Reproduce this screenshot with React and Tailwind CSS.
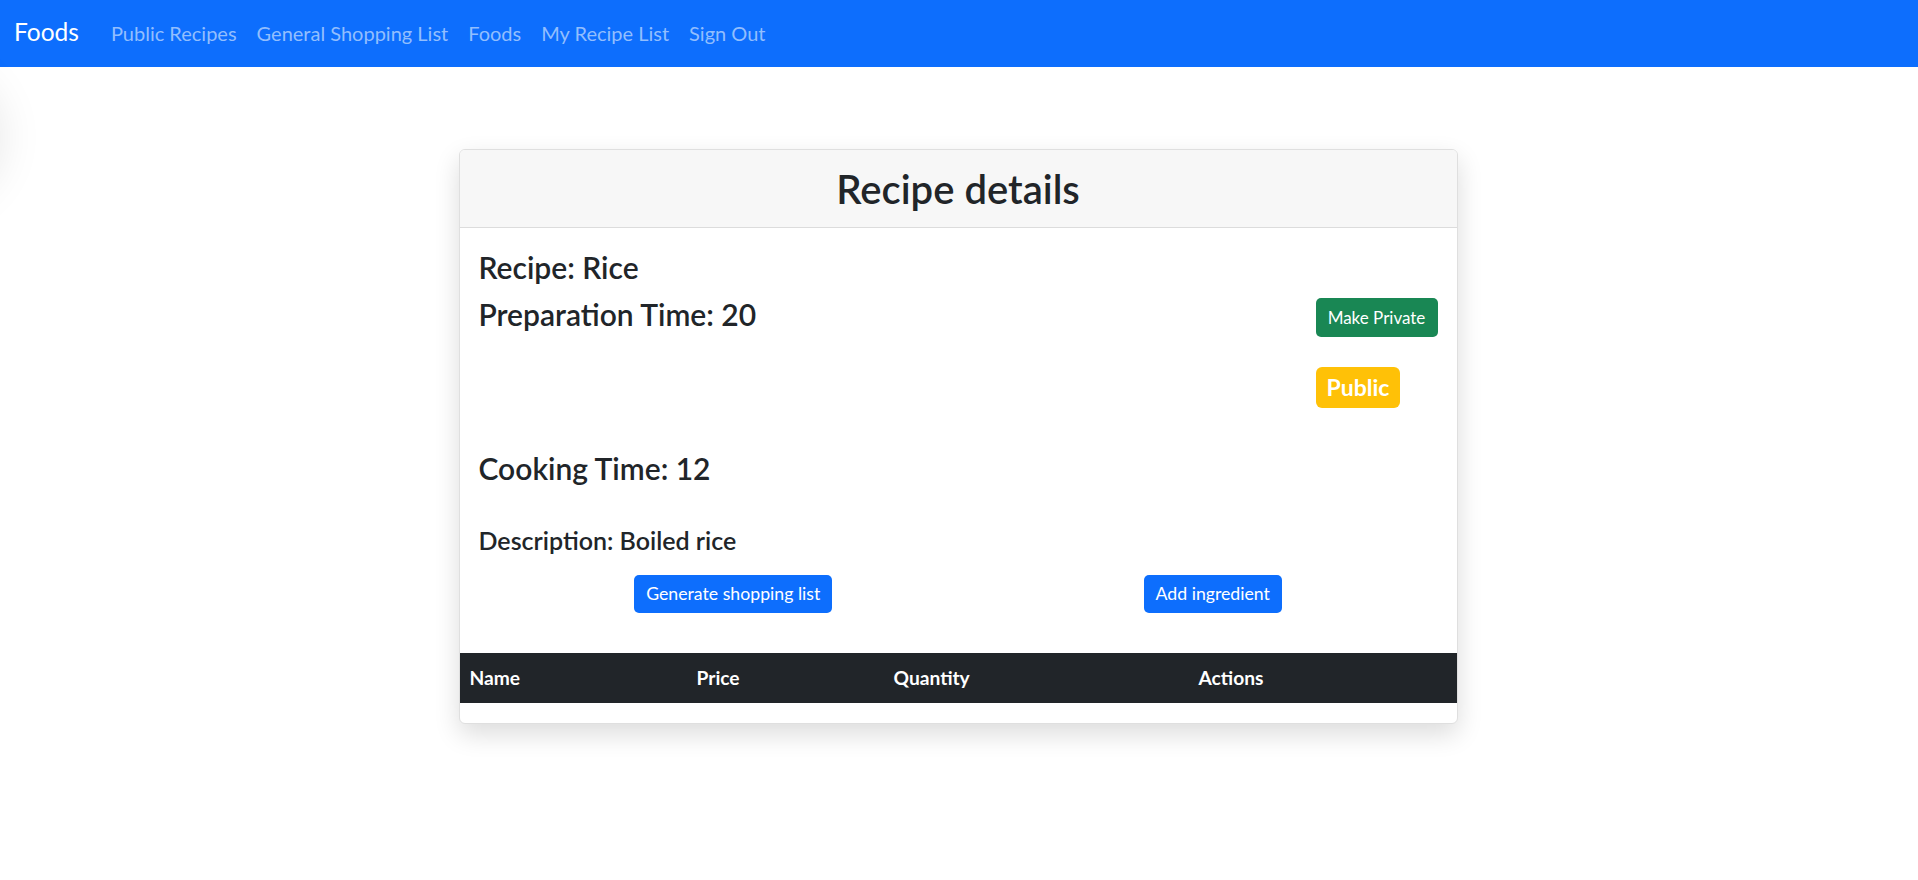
import React from 'react';

const font = { fontFamily: 'Lato, "Liberation Sans", sans-serif' };

const navLinks = ['Public Recipes', 'General Shopping List', 'Foods', 'My Recipe List', 'Sign Out'];

function Navbar() {
  return (
    <nav className="flex h-[67px] items-center bg-[#0d6efd] px-[14px] pb-[2px]">
      <span className="mr-[22px] text-[24.5px] leading-[1.5] text-white">Foods</span>
      <div className="flex items-center">
        {navLinks.map((l) => (
          <a key={l} href="#" className="px-[10px] text-[20px] leading-[1.5] text-[#92befe]">
            {l}
          </a>
        ))}
      </div>
    </nav>
  );
}

export default function App() {
  return (
    <div className="relative min-h-screen overflow-hidden bg-white text-[#212529]" style={font}>
      <Navbar />

      {/* faint shadow bleeding in from the left edge */}
      <div className="absolute -left-[220px] top-[72px] h-[130px] w-[220px] rounded-full shadow-[0_0_45px_rgba(0,0,0,0.10)]" />

      <div className="relative -left-[1px] mx-auto mt-[82px] w-[999px] overflow-hidden rounded-[6px] border border-[#dfdfdf] bg-white shadow-[0_10px_26px_rgba(0,0,0,0.14)]">
        {/* Header */}
        <div className="flex h-[78px] items-center justify-center border-b border-[#dcdcdc] bg-[#f7f7f7]">
          <h2 className="text-[40px] font-semibold leading-[1.2]">Recipe details</h2>
        </div>

        {/* Body */}
        <div className="px-[19px] pt-[21px]">
          <h4 className="mb-[11px] text-[30px] font-semibold leading-[1.2]">Recipe: Rice</h4>

          <div className="flex items-start justify-between">
            <h4 className="text-[30px] font-semibold leading-[1.2]">Preparation Time: 20</h4>
            <div className="flex w-[122px] flex-col items-start gap-[30px] pt-[2px]">
              <button className="h-[39px] w-[122px] rounded-[5px] bg-[#198754] text-[17px] leading-none text-white">
                Make Private
              </button>
              <span className="rounded-[6px] bg-[#ffc107] px-[11px] py-[9px] text-[23px] font-bold leading-none text-white">
                Public
              </span>
            </div>
          </div>

          <h4 className="mt-[42px] text-[30px] font-semibold leading-[1.2]">Cooking Time: 12</h4>

          <h5 className="mt-[39px] text-[25px] font-semibold leading-[1.2]">Description: Boiled rice</h5>

          <div className="ml-[15px] -mr-[15px] mt-[20px] grid grid-cols-2">
            <div className="flex justify-center">
              <button className="h-[38px] rounded-[5px] bg-[#0d6efd] px-[12px] text-[17.7px] leading-none text-white">
                Generate shopping list
              </button>
            </div>
            <div className="flex justify-center">
              <button className="h-[38px] rounded-[5px] bg-[#0d6efd] px-[12px] text-[17.7px] leading-none text-white">
                Add ingredient
              </button>
            </div>
          </div>
        </div>

        {/* Ingredients table */}
        <div className="mt-[40px] mb-[20px]">
          <div className="grid h-[50px] grid-cols-[227px_197px_305px_1fr] items-center bg-[#212529] text-[19.2px] font-bold leading-[1.5] text-white">
            <div className="px-[10px]">Name</div>
            <div className="px-[10px]">Price</div>
            <div className="px-[10px]">Quantity</div>
            <div className="px-[10px]">Actions</div>
          </div>
        </div>
      </div>
    </div>
  );
}
